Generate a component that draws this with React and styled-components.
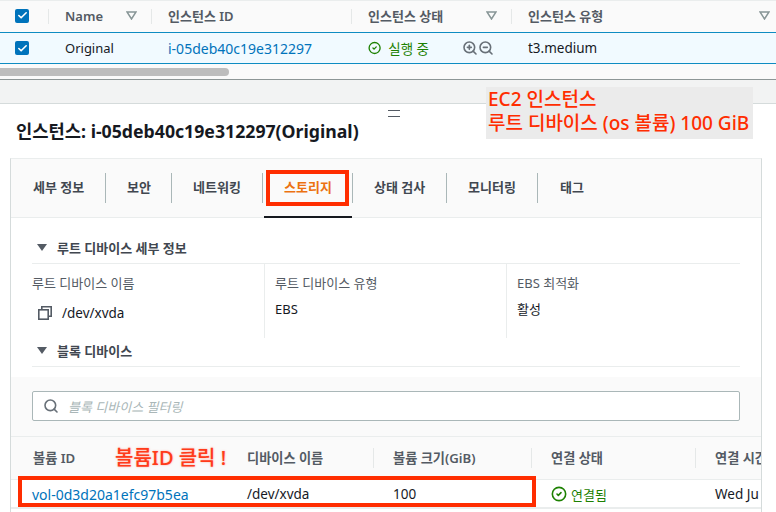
import styled, { createGlobalStyle } from "styled-components";
import { Check, CircleCheck, Search, ZoomIn, ZoomOut } from "lucide-react";

const GlobalStyle = createGlobalStyle`
  * {
    box-sizing: border-box;
  }
  html, body {
    margin: 0;
    padding: 0;
    background: #fff;
  }
  body {
    font-family: "Noto Sans", "Noto Sans CJK KR", sans-serif;
    font-size: 13px;
    color: #16191f;
  }
`;

const Page = styled.div`
  position: relative;
  width: 776px;
  height: 512px;
  overflow: hidden;
`;

/* instance list on top */
const TopTable = styled.div`
  height: 80px;
  border-top: 1px solid #eaeded;
  border-bottom: 1px solid #8d9696;
  background: #fafafa;
`;

const HeadRow = styled.div`
  display: grid;
  grid-template-columns: 48px 103px 200px 160px 1fr;
  height: 31px;
  align-items: center;
`;

const HeadCell = styled.div`
  position: relative;
  height: 100%;
  display: flex;
  align-items: center;
  justify-content: space-between;
  padding: 0 ${(p) => p.$right || 14}px 2px ${(p) => p.$left || 17}px;
  font-weight: 600;
  color: #545b64;
  white-space: nowrap;

  &::before {
    content: "";
    display: ${(p) => (p.$first ? "none" : "block")};
    position: absolute;
    left: 0;
    top: 8px;
    height: 15px;
    width: 1px;
    background: #e5e8e8;
  }
`;

const SelectedRow = styled.div`
  display: grid;
  grid-template-columns: 48px 103px 200px 160px 1fr;
  height: 32px;
  align-items: center;
  background: #f1faff;
  border-top: 1px solid #0e8cc2;
  border-bottom: 1px solid #0e8cc2;
`;

const Cell = styled.div`
  padding: 0 17px;
  font-size: ${(p) => p.$size || 13}px;
  white-space: nowrap;
  display: flex;
  align-items: center;
  gap: ${(p) => p.$gap || 0}px;
`;

const CheckCell = styled.div`
  display: flex;
  padding-left: 15px;
`;

const CheckBox = styled.span`
  width: 14px;
  height: 14px;
  border-radius: 2px;
  background: #0073bb;
  color: #fff;
  display: flex;
  align-items: center;
  justify-content: center;
`;

const IdLink = styled.span`
  color: #0073bb;
  font-size: 14px;
`;

const Running = styled.span`
  color: #1d8102;
  font-size: 13.5px;
`;

const ZoomIcons = styled.span`
  display: flex;
  gap: 0;
  margin-left: 26px;
  color: #687078;
`;

const ScrollTrack = styled.div`
  height: 15px;
  padding-top: 4px;
`;

const ScrollThumb = styled.div`
  width: 229px;
  height: 8px;
  background: #bdbdbd;
  border-radius: 0 4px 4px 0;
`;

const SplitBand = styled.div`
  height: 24px;
  background: #f2f3f3;
  border-bottom: 1px solid #d5dbdb;
`;

const Grip = styled.div`
  position: absolute;
  left: 388px;
  top: 110px;
  width: 12px;
  height: 7px;
  border-top: 1px solid #545b64;
  border-bottom: 1px solid #545b64;
`;

const Note = styled.div`
  position: absolute;
  left: 486px;
  top: 87px;
  width: 267px;
  height: 52px;
  padding: 0 0 0 2px;
  background: #ebebeb;
  color: #ff2d00;
  font-size: 19px;
  font-weight: 500;
  line-height: 24px;
  white-space: nowrap;
`;

const Title = styled.h1`
  margin: 0;
  padding: 16px 0 0 16px;
  height: 54px;
  font-size: 17.7px;
  font-weight: 700;
  line-height: 22px;
`;

/* details panel */
const Panel = styled.div`
  margin-left: 10px;
  width: 752px;
  height: 354px;
  border: 1px solid #d5dbdb;
  border-top-color: #eaeded;
  border-bottom: none;
`;

const TabBar = styled.div`
  display: flex;
  height: 59px;
  background: #fafafa;
  border-bottom: 1px solid #eaeded;
`;

const Tab = styled.div`
  position: relative;
  width: ${(p) => p.$w}px;
  padding: 0 0 3px ${(p) => p.$left}px;
  display: flex;
  align-items: center;
  height: 58px;
  font-weight: 600;
  font-size: 13px;
  color: ${(p) => (p.$active ? "#ec7211" : "#414750")};
  white-space: nowrap;

  &::after {
    content: "";
    display: ${(p) => (p.$last ? "none" : "block")};
    position: absolute;
    right: 0;
    top: 14px;
    height: 30px;
    width: 1px;
    background: #aab7b8;
  }

  ${(p) =>
    p.$active &&
    `&::before {
      content: "";
      position: absolute;
      left: 1px;
      right: 1px;
      bottom: -1px;
      height: 2px;
      background: #16191f;
    }`}
`;

const Section = styled.div`
  padding: 0 21px;
`;

const SectionHead = styled.div`
  display: flex;
  align-items: center;
  gap: 10px;
  height: ${(p) => p.$h}px;
  padding: ${(p) => p.$top}px 0 ${(p) => p.$bottom || 0}px 5px;
  font-size: 13px;
  font-weight: 600;
  color: #414750;
  border-bottom: 1px solid #eaeded;
`;

const Caret = styled.span`
  width: 0;
  height: 0;
  border-left: 5px solid transparent;
  border-right: 5px solid transparent;
  border-top: 7px solid #545b64;
`;

const InfoGrid = styled.div`
  display: grid;
  grid-template-columns: 232px 242px 1fr;
  height: 74px;
`;

const InfoCol = styled.div`
  padding: 10px 0 0 ${(p) => (p.$first ? 0 : 10)}px;
  border-left: ${(p) => (p.$first ? "none" : "1px solid #eaeded")};
`;

const InfoLabel = styled.div`
  color: #545b64;
  font-size: 13px;
  line-height: 18px;
`;

const InfoValue = styled.div`
  display: flex;
  align-items: center;
  gap: 10px;
  margin-top: ${(p) => p.$mt || 8}px;
  margin-left: ${(p) => p.$ml || 0}px;
  font-size: ${(p) => p.$size || 13}px;
  line-height: 18px;
`;

const FilterBand = styled.div`
  margin-top: 10px;
  height: 60px;
  padding: 14px 21px 0;
  background: #fafafa;
  border-bottom: 1px solid #eaeded;
`;

const FilterBox = styled.div`
  display: flex;
  align-items: center;
  gap: 9px;
  height: 30px;
  padding-left: 10px;
  background: #fff;
  border: 1px solid #aab7b8;
  border-radius: 2px;
  color: #687078;
`;

const Placeholder = styled.span`
  color: #aab7b8;
  font-style: italic;
  font-size: 13px;
`;

const VolHead = styled.div`
  display: grid;
  grid-template-columns: 215px 147px 158px 164px 1fr;
  height: 43px;
  align-items: center;
  background: #fafafa;
  border-bottom: 1px solid #eaeded;
`;

const VolHeadCell = styled.div`
  position: relative;
  padding-left: ${(p) => p.$pad || 20}px;
  font-size: 13.2px;
  font-weight: 600;
  color: #545b64;
  white-space: nowrap;
  overflow: hidden;
  line-height: 20px;

  &::before {
    content: "";
    display: ${(p) => (p.$line ? "block" : "none")};
    position: absolute;
    left: 0;
    top: 0;
    width: 1px;
    height: 20px;
    background: #e5e8e8;
  }
`;

const VolRow = styled.div`
  display: grid;
  grid-template-columns: 215px 147px 158px 164px 1fr;
  height: 29px;
  padding-top: 1px;
  align-items: center;
  background: #fff;
  border-bottom: 2px solid #eaeded;
`;

const VolCell = styled.div`
  display: flex;
  align-items: center;
  gap: 4px;
  padding-left: ${(p) => p.$pad || 20}px;
  font-size: 13.5px;
  white-space: nowrap;
  overflow: hidden;
`;

const Attached = styled.span`
  color: #1d8102;
  font-size: 13px;
`;

const RedBox = styled.div`
  position: absolute;
  left: ${(p) => p.$x}px;
  top: ${(p) => p.$y}px;
  width: ${(p) => p.$w}px;
  height: ${(p) => p.$h}px;
  border: 4px solid #ff2d00;
`;

const ClickNote = styled.div`
  position: absolute;
  left: 115px;
  top: 446px;
  color: #ff3b1a;
  font-size: 20px;
  font-weight: 500;
  line-height: 24px;
  white-space: nowrap;
  text-shadow: 0 0 2px rgba(255, 80, 50, 0.5);
`;

const SortArrow = () => (
  <svg width="11" height="9" viewBox="0 0 11 9">
    <path d="M1 1h9L5.5 8z" fill="none" stroke="#879596" strokeWidth="1.5" />
  </svg>
);

const CopyIcon = () => (
  <svg width="14" height="14" viewBox="0 0 14 14" fill="none" stroke="#545b64" strokeWidth="1.6">
    <rect x="0.8" y="3.8" width="9.4" height="9.4" />
    <path d="M3.8 3.5V.8h9.4v9.4h-2.7" />
  </svg>
);

const tabs = [
  { label: "세부 정보", w: 95, left: 22 },
  { label: "보안", w: 66, left: 21 },
  { label: "네트워킹", w: 91, left: 21 },
  { label: "스토리지", w: 90, left: 21, active: true },
  { label: "상태 검사", w: 94, left: 21 },
  { label: "모니터링", w: 91, left: 21 },
  { label: "태그", w: 70, left: 22, last: true },
];

export default function App() {
  return (
    <Page>
      <GlobalStyle />
      <TopTable>
        <HeadRow>
          <HeadCell $first $left={15}>
            <CheckBox><Check size={11} strokeWidth={3.5} /></CheckBox>
          </HeadCell>
          <HeadCell>Name<SortArrow /></HeadCell>
          <HeadCell>인스턴스 ID</HeadCell>
          <HeadCell>인스턴스 상태<SortArrow /></HeadCell>
          <HeadCell $right={6}>인스턴스 유형<SortArrow /></HeadCell>
        </HeadRow>
        <SelectedRow>
          <CheckCell>
            <CheckBox><Check size={11} strokeWidth={3.5} /></CheckBox>
          </CheckCell>
          <Cell>Original</Cell>
          <Cell><IdLink>i-05deb40c19e312297</IdLink></Cell>
          <Cell $gap={7}>
            <CircleCheck size={16} color="#1d8102" strokeWidth={2.4} />
            <Running>실행 중</Running>
            <ZoomIcons>
              <ZoomIn size={16} strokeWidth={2.4} />
              <ZoomOut size={16} strokeWidth={2.4} />
            </ZoomIcons>
          </Cell>
          <Cell $size={13.5}>t3.medium</Cell>
        </SelectedRow>
        <ScrollTrack><ScrollThumb /></ScrollTrack>
      </TopTable>
      <SplitBand />
      <Title>인스턴스: i-05deb40c19e312297(Original)</Title>

      <Panel>
        <TabBar>
          {tabs.map((t) => (
            <Tab key={t.label} $w={t.w} $left={t.left} $active={t.active} $last={t.last}>
              {t.label}
            </Tab>
          ))}
        </TabBar>
        <Section>
          <SectionHead $h={46} $top={14}>
            <Caret />루트 디바이스 세부 정보
          </SectionHead>
          <InfoGrid>
            <InfoCol $first>
              <InfoLabel>루트 디바이스 이름</InfoLabel>
              <InfoValue $ml={6} $mt={12} $size={13.5}><CopyIcon />/dev/xvda</InfoValue>
            </InfoCol>
            <InfoCol>
              <InfoLabel>루트 디바이스 유형</InfoLabel>
              <InfoValue>EBS</InfoValue>
            </InfoCol>
            <InfoCol>
              <InfoLabel>EBS 최적화</InfoLabel>
              <InfoValue>활성</InfoValue>
            </InfoCol>
          </InfoGrid>
          <SectionHead $h={29} $top={0} $bottom={3}>
            <Caret />블록 디바이스
          </SectionHead>
        </Section>
        <FilterBand>
          <FilterBox>
            <Search size={16} strokeWidth={2.4} />
            <Placeholder>블록 디바이스 필터링</Placeholder>
          </FilterBox>
        </FilterBand>
        <VolHead>
          <VolHeadCell $pad={22}>볼륨 ID</VolHeadCell>
          <VolHeadCell $pad={21}>디바이스 이름</VolHeadCell>
          <VolHeadCell $line>볼륨 크기(GiB)</VolHeadCell>
          <VolHeadCell $line>연결 상태</VolHeadCell>
          <VolHeadCell $line>연결 시간</VolHeadCell>
        </VolHead>
        <VolRow>
          <VolCell $pad={21}><IdLink>vol-0d3d20a1efc97b5ea</IdLink></VolCell>
          <VolCell $pad={21}>/dev/xvda</VolCell>
          <VolCell>100</VolCell>
          <VolCell>
            <CircleCheck size={16} color="#1d8102" strokeWidth={2.4} />
            <Attached>연결됨</Attached>
          </VolCell>
          <VolCell>Wed Ju</VolCell>
        </VolRow>
      </Panel>

      <Grip />
      <Note>EC2 인스턴스<br />루트 디바이스 (os 볼륨) 100 GiB</Note>
      <RedBox $x={266} $y={170} $w={83} $h={36} />
      <RedBox $x={18} $y={476} $w={518} $h={31} />
      <ClickNote>볼륨ID 클릭 !</ClickNote>
    </Page>
  );
}
